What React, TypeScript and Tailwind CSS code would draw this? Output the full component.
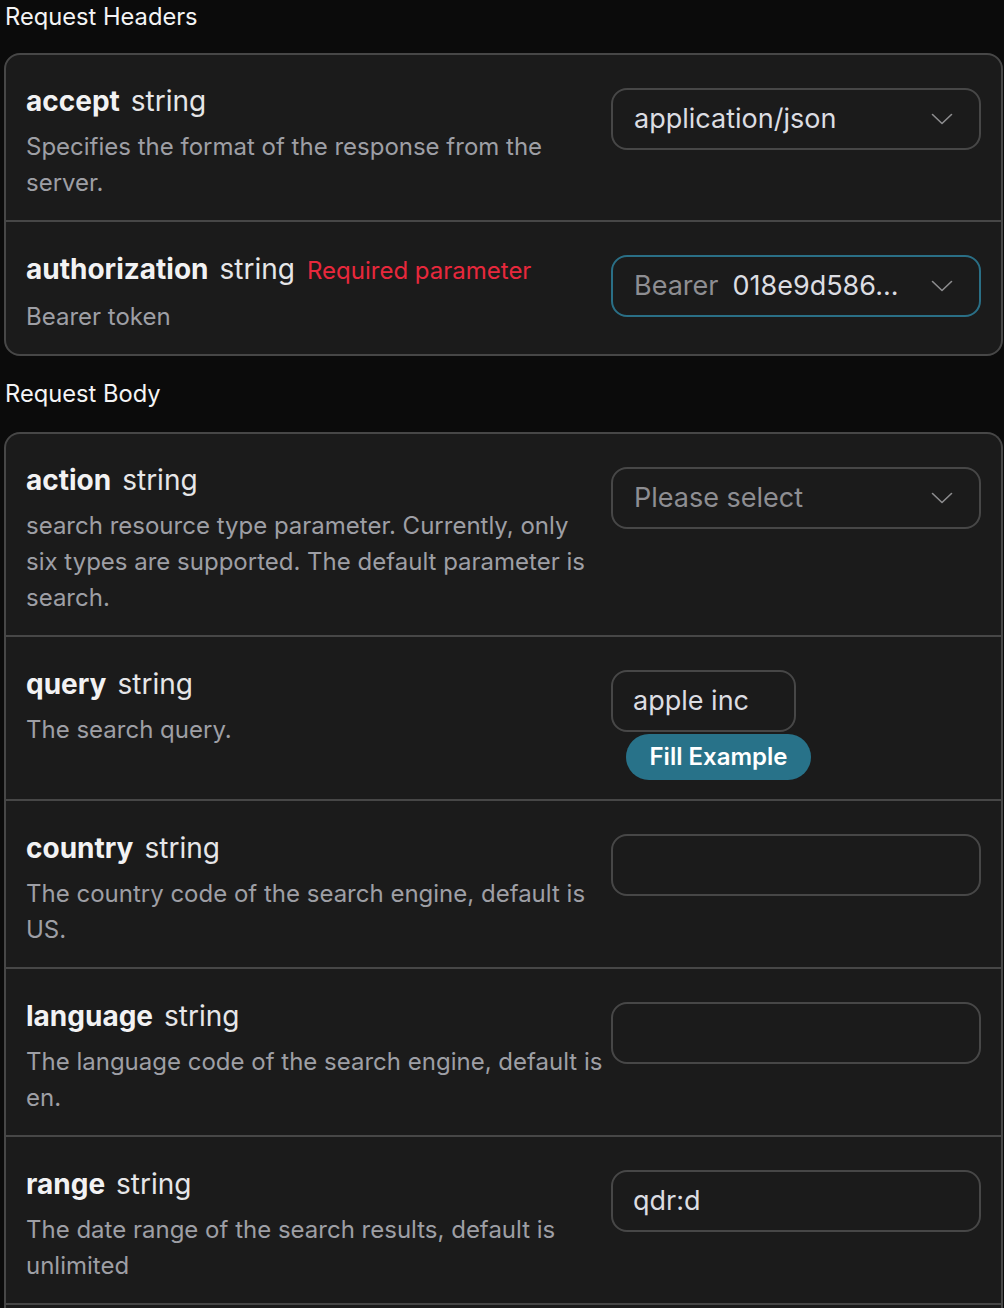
import React from "react";

const Chevron = () => (
  <svg width="22" height="12" viewBox="0 0 22 12" fill="none" className="shrink-0">
    <path d="M1.5 1.5 L11 10.5 L20.5 1.5" stroke="#8d8d8f" strokeWidth="1.6" strokeLinecap="round" strokeLinejoin="round" />
  </svg>
);

type Row = {
  name: string;
  desc: string[];
  required?: boolean;
  control: React.ReactNode;
};

const SelectBox = ({ children, active }: { children: React.ReactNode; active?: boolean }) => (
  <div
    className={`flex items-center justify-between h-[62px] w-[370px] rounded-[16px] border-2 pl-[21px] pr-[26px] ${
      active ? "border-[#2a6f86]" : "border-[#474747]"
    }`}
  >
    <div className="flex items-center gap-[14px] text-[27px] text-[#dcdde2] whitespace-nowrap">{children}</div>
    <Chevron />
  </div>
);

const InputBox = ({ value, w = "w-[370px]" }: { value?: string; w?: string }) => (
  <div className={`flex items-center h-[62px] ${w} rounded-[16px] border-2 border-[#474747] pl-[20px] text-[27px] text-[#dcdde2]`}>
    {value}
  </div>
);

const ParamRow = ({ row, first }: { row: Row; first?: boolean }) => (
  <div className={`flex gap-[10px] px-[20px] pb-[19px] ${first ? "pt-[28px]" : "pt-[29px] border-t-2 border-[#474747]"}`}>
    <div className="flex-1 min-w-0">
      <div className="flex items-baseline gap-[11px] leading-[36px] whitespace-nowrap">
        <span className="text-[28px] font-bold text-[#f2f2f3]">{row.name}</span>
        <span className="text-[28px] text-[#e6e6e8]">string</span>
        {row.required && <span className="ml-[1px] text-[24px] text-[#e8283c]">Required parameter</span>}
      </div>
      <div className="mt-[10px] text-[24px] leading-[36px] text-[#9e9fa5]">
        {row.desc.map((l) => (
          <div key={l} className="whitespace-nowrap">
            {l}
          </div>
        ))}
      </div>
    </div>
    <div className={`w-[370px] shrink-0 ${first ? "pt-[5px]" : "pt-[4px]"}`}>{row.control}</div>
  </div>
);

export default function App() {
  const headers: Row[] = [
    {
      name: "accept",
      desc: ["Specifies the format of the response from the", "server."],
      control: <SelectBox>application/json</SelectBox>,
    },
    {
      name: "authorization",
      desc: ["Bearer token"],
      required: true,
      control: (
        <SelectBox active>
          <span className="text-[#8e8e92]">Bearer</span>
          <span>018e9d586...</span>
        </SelectBox>
      ),
    },
  ];
  const body: Row[] = [
    {
      name: "action",
      desc: [
        "search resource type parameter. Currently, only",
        "six types are supported. The default parameter is",
        "search.",
      ],
      control: (
        <SelectBox>
          <span className="text-[#8e8e92]">Please select</span>
        </SelectBox>
      ),
    },
    {
      name: "query",
      desc: ["The search query."],
      control: (
        <div className="flex flex-col items-start">
          <InputBox value="apple inc" w="w-[185px]" />
          <button className="ml-[15px] mt-[2px] h-[46px] w-[185px] rounded-full bg-[#287289] text-[24px] font-semibold text-white">
            Fill Example
          </button>
        </div>
      ),
    },
    { name: "country", desc: ["The country code of the search engine, default is", "US."], control: <InputBox /> },
    { name: "language", desc: ["The language code of the search engine, default is", "en."], control: <InputBox /> },
    { name: "range", desc: ["The date range of the search results, default is", "unlimited"], control: <InputBox value="qdr:d" /> },
  ];

  return (
    <div className="h-[1308px] bg-[#0b0b0b] font-['Inter','Noto_Sans',sans-serif] overflow-hidden">
      <div className="pl-[5px] text-[23.7px] leading-[34px] text-[#f4f4f5]">Request Headers</div>
      <div className="ml-[4px] mr-[1px] mt-[19px] rounded-[16px] border-2 border-[#474747] bg-[#1b1b1b]">
        {headers.map((r, i) => (
          <ParamRow key={r.name} row={r} first={i === 0} />
        ))}
      </div>
      <div className="pl-[5px] mt-[21px] text-[23.7px] leading-[34px] text-[#f4f4f5]">Request Body</div>
      <div className="ml-[4px] mr-[1px] mt-[21px] rounded-t-[16px] border-2 border-b-0 border-[#474747] bg-[#1b1b1b]">
        {body.map((r, i) => (
          <ParamRow key={r.name} row={r} first={i === 0} />
        ))}
        <div className="h-[60px] border-t-2 border-[#474747]" />
      </div>
    </div>
  );
}
